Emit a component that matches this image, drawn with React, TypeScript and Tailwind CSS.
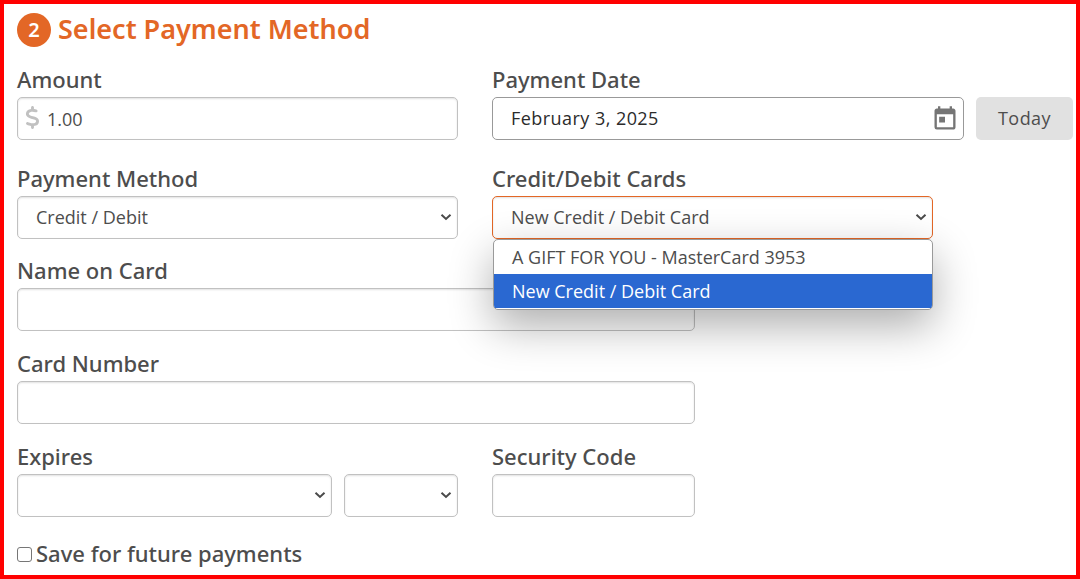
import React, { useState } from 'react';
import { FaDollarSign } from 'react-icons/fa6';
import { MdToday } from 'react-icons/md';

const labelClass = "block h-[30px] font-['Noto_Sans',sans-serif] text-[22px] leading-[24px] font-medium text-[#4d4d4d]";
const controlClass =
  'block w-full h-[43px] rounded-[5px] border bg-white text-lg text-[#4d4d4d] shadow-[inset_0_1px_2px_rgba(0,0,0,0.12)] focus:outline-none';

const savedCards = ['A GIFT FOR YOU - MasterCard 3953', 'New Credit / Debit Card'];
const months = ['', 'January', 'February', 'March', 'April', 'May', 'June', 'July', 'August', 'September', 'October', 'November', 'December'];
const years = ['', '2025', '2026', '2027', '2028', '2029', '2030'];

interface SelectBoxProps {
  id: string;
  options: string[];
  label?: string;
  active?: boolean;
  value: string;
  onChange: (value: string) => void;
}

const SelectBox: React.FC<SelectBoxProps> = ({ id, options, label, active, value, onChange }) => (
  <div className="relative">
    <select
      id={id}
      aria-label={label}
      value={value}
      onChange={(e) => onChange(e.target.value)}
      className={`${controlClass} appearance-none pl-[18px] pr-8 pb-[2px] ${active ? 'border-[#e36726]' : 'border-[#c1c1c1]'}`}
    >
      {options.map((option) => (
        <option key={option} value={option}>{option}</option>
      ))}
    </select>
    <svg
      className="pointer-events-none absolute right-[6px] top-[15px] h-3 w-3"
      viewBox="0 0 12 12"
      fill="none"
      stroke="#4a4a4a"
      strokeWidth="2"
    >
      <path d="M1.5 3.8 6 8l4.5-4.2" />
    </svg>
  </div>
);

const App: React.FC = () => {
  const [amount, setAmount] = useState('1.00');
  const [date, setDate] = useState('February 3, 2025');
  const [method, setMethod] = useState('Credit / Debit');
  const [card, setCard] = useState(savedCards[1]);
  const [month, setMonth] = useState('');
  const [year, setYear] = useState('');
  const [open, setOpen] = useState(true);

  const pickCard = (option: string) => {
    setCard(option);
    setOpen(false);
  };

  return (
    <form className="min-h-screen border-4 border-[#ff0000] bg-white pt-[9px] pr-[3px] pl-[13px] font-['Open_Sans','Noto_Sans',sans-serif]">
      <h1 className="mb-5 flex h-[34px] items-center gap-[7px] font-['Noto_Sans',sans-serif] text-[27px] leading-[32px] font-semibold text-[#e36726]">
        <span className="flex h-[34px] w-[34px] items-center justify-center rounded-full bg-[#e36726] text-xl text-white">2</span>
        <span className="pb-[2px]">Select Payment Method</span>
      </h1>

      <div className="mb-[26px] grid grid-cols-[441fr_581fr] gap-x-[34px]">
        <div>
          <label htmlFor="amount" className={labelClass}>Amount</label>
          <div className="relative">
            <FaDollarSign className="absolute left-1 top-[9px] h-[23px] w-[23px] text-[#c1c1c1]" />
            <input id="amount" type="text" value={amount} onChange={(e) => setAmount(e.target.value)} className={`${controlClass} border-[#c1c1c1] pl-[29px]`} />
          </div>
        </div>
        <div>
          <label htmlFor="date" className={labelClass}>Payment Date</label>
          <div className="flex gap-3">
            <div className="flex h-[43px] min-w-0 flex-1 items-center rounded-[5px] border border-[#999] pr-1">
              <input
                id="date"
                type="text"
                value={date}
                onChange={(e) => setDate(e.target.value)}
                className="min-w-0 flex-1 pb-[2px] pl-[18px] text-lg tracking-wide text-[#2b2b2b] focus:outline-none"
              />
              <button type="button" aria-label="Choose date" className="text-[#757575]">
                <MdToday className="h-7 w-7" />
              </button>
            </div>
            <button
              type="button"
              onClick={() => setDate('February 3, 2025')}
              className="h-[43px] w-[97px] rounded-[5px] bg-[#e1e1e1] pb-[2px] text-lg tracking-wide text-[#4d4d4d]"
            >
              Today
            </button>
          </div>
        </div>
      </div>

      <div className="mb-[19px] grid grid-cols-[441fr_581fr] gap-x-[34px]">
        <div>
          <label htmlFor="method" className={labelClass}>Payment Method</label>
          <SelectBox id="method" options={['Credit / Debit', 'Bank Account']} value={method} onChange={setMethod} />
        </div>
        <div>
          <label htmlFor="card" className={labelClass}>Credit/Debit Cards</label>
          <div className="relative max-w-[441px]">
            <SelectBox id="card" options={savedCards} active={open} value={card} onChange={pickCard} />
            {open && (
              <ul
                role="listbox"
                aria-label="Credit/Debit Cards"
                className="absolute top-full right-0 left-px z-10 overflow-hidden rounded-[5px] border border-[#9a9a9a] bg-white pb-px text-lg leading-[34px] text-[#4d4d4d] shadow-[0_16px_44px_rgba(0,0,0,0.32)]"
              >
                {savedCards.map((option) => (
                  <li
                    key={option}
                    role="option"
                    aria-selected={option === card}
                    onClick={() => pickCard(option)}
                    className={option === card ? 'bg-[#2a68d1] pl-[18px] text-white' : 'pl-[18px]'}
                  >
                    {option}
                  </li>
                ))}
              </ul>
            )}
          </div>
        </div>
      </div>

      <div className="mb-5 max-w-[678px]">
        <label htmlFor="name" className={labelClass}>Name on Card</label>
        <input id="name" type="text" className={`${controlClass} border-[#c1c1c1] px-[18px]`} />
      </div>

      <div className="mb-5 max-w-[678px]">
        <label htmlFor="number" className={labelClass}>Card Number</label>
        <input id="number" type="text" className={`${controlClass} border-[#c1c1c1] px-[18px]`} />
      </div>

      <div className="mb-5 grid grid-cols-[441fr_581fr] gap-x-[34px]">
        <div>
          <label htmlFor="month" className={labelClass}>Expires</label>
          <div className="grid grid-cols-[315fr_114fr] gap-3">
            <SelectBox id="month" options={months} value={month} onChange={setMonth} />
            <SelectBox id="year" label="Expiration year" options={years} value={year} onChange={setYear} />
          </div>
        </div>
        <div>
          <label htmlFor="code" className={labelClass}>Security Code</label>
          <input id="code" type="text" className={`${controlClass} max-w-[203px] border-[#c1c1c1] px-[18px]`} />
        </div>
      </div>

      <div className="flex items-center gap-1">
        <input
          id="save"
          type="checkbox"
          className="h-[15px] w-[15px] appearance-none rounded-[3px] border border-[#767676] bg-white checked:bg-[#e36726]"
        />
        <label htmlFor="save" className="pb-[2px] font-['Noto_Sans',sans-serif] text-[22px] leading-[32px] font-medium text-[#4d4d4d]">
          Save for future payments
        </label>
      </div>
    </form>
  );
};

export default App;
